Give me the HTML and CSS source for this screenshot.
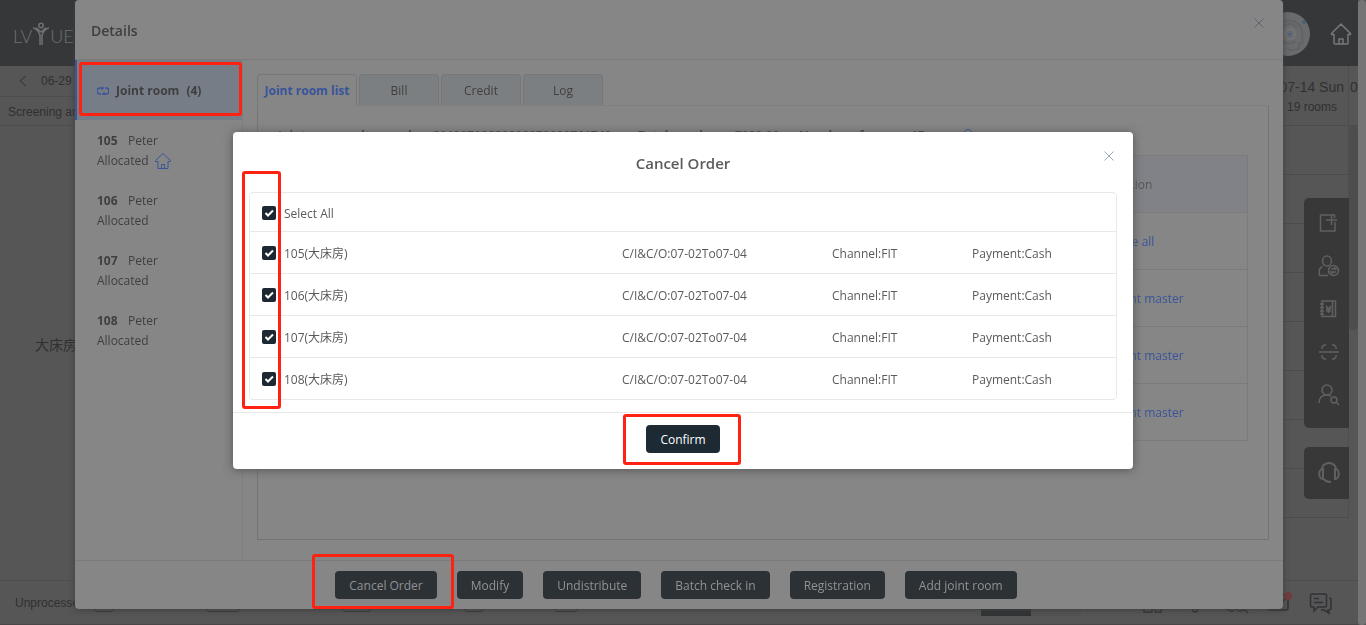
FILE: index.html
```html
<!DOCTYPE html>
<html lang="en">
<head>
<meta charset="utf-8">
<title>Cancel Order</title>
<link rel="stylesheet" href="styles.css">
</head>
<body>
<div class="app">
  <header class="topbar">
    <div class="logo" aria-label="LVYUE">
      <span>LV</span>
      <svg width="18" height="24" viewBox="0 0 18 24" fill="none" stroke="currentColor" stroke-width="1.5"><circle cx="9" cy="3.500" r="2.200"/><path d="M1 6c3 0 5 2 7 7v10M17 6c-3 0-5 2-7 7v10M4 6c2 1 3 2.500 5 4 2-1.500 3-3 5-4"/></svg>
      <span>UE</span>
    </div>
    <div class="topbar-right">
      <svg class="avatar" width="44" height="44" viewBox="0 0 44 44"><circle cx="22" cy="22" r="22" fill="#6a6b6c"/><g fill="none" stroke="#626364" stroke-width="2"><path d="M10 34c-3-10-1-22 10-25 10-2 17 5 16 14l1 7-4 2v4c-4 3-9 3-12 0"/><path d="M16 15c5-4 12-4 15 1M16 29c4 3 9 3 13 0"/><circle cx="24" cy="22" r="5" stroke="#737475"/></g><circle cx="24" cy="22" r="1.500" fill="#42608a"/><circle cx="38" cy="10" r="2" fill="#4a5d7c"/></svg>
      <svg class="home" width="22" height="22" viewBox="0 0 22 22" fill="none" stroke="#777879" stroke-width="1.500" stroke-linejoin="round"><path d="M11 1 1.500 10.500v1H4V20a1 1 0 0 0 1 1h12a1 1 0 0 0 1-1v-8.500h2.500v-1z"/><path d="M9 21v-5h4v5"/></svg>
    </div>
  </header>
  <div class="board">
    <div class="rooms">
      <div class="date-nav"><svg width="8" height="12" viewBox="0 0 8 12" fill="none" stroke="#303030"><path d="M7 1 1 6l6 5"/></svg><span>06-29</span></div>
      <div class="filter">Screening and</div>
      <div class="room-type">大床房</div>
    </div>
    <div class="calendar">
      <div class="days"><div class="day"><b>07-14 Sun</b><span>19 rooms</span></div><div class="day-next">0</div></div>
      <div class="cells"><i></i><i></i><i></i><i></i><i></i><i></i><i></i><i></i></div>
    </div>
  </div>
  <footer class="status">
    <span class="unprocessed">Unprocessed</span>
    <span class="slot"><i class="w20"></i></span><span class="slot slot-b"><i class="w34"></i></span><span class="slot slot-c"><i class="w28"></i></span><span class="slot slot-d"><i class="w20"></i></span><span class="slot slot-e"><i class="w24"></i></span>
    <span class="pager"><i></i><i></i></span>
    <div class="status-icons">
      <svg width="24" height="22" viewBox="0 0 24 22"><path d="M11 2H3v18h8v-7M14 20l1-6 6-9 2 2-3 13h-6"/></svg>
      <svg width="24" height="22" viewBox="0 0 24 22"><path d="M3 16h18M5 16V9a7 7 0 0 1 14 0v7M9 16c0 5 6 5 6 0"/></svg>
      <svg width="24" height="22" viewBox="0 0 24 22"><path d="M5 2h14v5M5 2v13H2v2l4 2h3"/><circle cx="15" cy="13" r="6"/><path d="m19 17 4 4"/></svg>
      <svg width="24" height="22" viewBox="0 0 24 22"><rect x="1" y="3" width="20" height="15" rx="2"/><path d="m1 5 10 8L21 5"/><circle class="dot" cx="21" cy="4" r="4"/></svg>
      <svg width="24" height="22" viewBox="0 0 24 22"><path d="M3 2h13a1.500 1.500 0 0 1 1.500 1.500v10a1.500 1.500 0 0 1-1.500 1.500H9l-4 4v-4H3a1.500 1.500 0 0 1-1.500-1.500v-10A1.500 1.500 0 0 1 3 2zM5 6.500h5M5 10.500h9M20 6c1 0 2 .5 2 2v8c0 1-1 2-2 2h-1l1 3-5-3h-3"/></svg>
    </div>
  </footer>
</div>

<aside class="tools">
  <nav class="toolbox">
    <svg width="22" height="22" viewBox="0 0 22 22"><path d="M12 3H2.500v16H17v-9M13.500 3v10M8 8h11M12 3h4.500v3"/></svg>
    <svg width="22" height="22" viewBox="0 0 22 22"><ellipse cx="9" cy="6" rx="4.500" ry="5"/><path d="M10 20.500H1.500c-1-5 0-8 3-9"/><circle cx="15.500" cy="15.500" r="5"/><path d="M13 14h5l-2-2M18 17h-5l2 2"/></svg>
    <svg width="22" height="22" viewBox="0 0 22 22"><path d="M4 3h13.500v15.500H4zM14.500 3v15.500M2 6h4M2 9.500h4M2 13h4M2 16h4M8 8l2.500 3L13 8M10.500 11v4M8 11h5M8 13h5"/></svg>
    <svg width="22" height="22" viewBox="0 0 22 22"><path d="M1 11h20M4 8V6l2-2h2M14 4h2l2 2v2M4 14v2l2 2h2M14 18h2l2-2v-2"/></svg>
    <svg width="22" height="22" viewBox="0 0 22 22"><circle cx="9" cy="6" r="5"/><path d="M1 19c0-5 3-8 8-8 2 0 3 .5 4 1"/><circle cx="16" cy="16" r="3"/><path d="m18 18 3 3"/></svg>
  </nav>
  <nav class="toolbox support">
    <svg width="22" height="22" viewBox="0 0 22 22"><path d="M4 7a7 6 0 0 1 14 0M5 7c-5 0-5 10 0 10zM17 7c5 0 5 10 0 10zM6 17c1 2 4 3 7 3"/></svg>
  </nav>
</aside>
<div class="inner-scroll"></div>
<div class="page-scroll"></div>

<div class="layer">
  <section class="details">
    <header class="details-head"><h2>Details</h2>
      <button class="close" aria-label="Close details"><svg width="10" height="10" viewBox="0 0 10 10"><path d="m.5.5 9 9m0-9-9 9"/></svg></button>
    </header>
    <div class="details-body">
      <div class="side">
        <div class="side-tab"><svg width="12" height="8" viewBox="0 0 12 8" fill="none" stroke="#39549a" stroke-width="1.500"><path d="M4 7H3a3 3 0 0 1 0-6h3M8 1h1a3 3 0 0 1 0 6H6M4.500 0 6 1 4.500 2.500M7.500 5.500 6 7l1.500 1"/></svg><b>Joint room</b><b>(4)</b><span class="mark mark-tab"></span></div>
        <div class="guest"><p><b>105</b>Peter</p><p>Allocated<svg width="16" height="16" viewBox="0 0 16 16" fill="none" stroke="#39549a"><path d="M8 .5.500 7.500v1H3v7h10v-7h2.500v-1zM6.500 15.500v-4h3v4"/></svg></p></div>
        <div class="guest"><p><b>106</b>Peter</p><p>Allocated</p></div>
        <div class="guest"><p><b>107</b>Peter</p><p>Allocated</p></div>
        <div class="guest"><p><b>108</b>Peter</p><p>Allocated</p></div>
      </div>
      <div class="content">
        <div class="tabs"><button class="tab active">Joint room list</button><button class="tab">Bill</button><button class="tab">Credit</button><button class="tab">Log</button></div>
        <div class="panel">
          <div class="summary"><span class="order">Joint room order number:</span><span class="digits">20190702222222270222761742</span><span class="total">Total number:</span><span class="sum">7298.00</span><span class="count">Number of rooms:</span><span>17</span><svg width="10" height="10" viewBox="0 0 10 10" fill="none" stroke="#39549a"><circle cx="5" cy="5" r="4.500"/></svg></div>
          <table class="orders">
            <tr><th></th><th>Operation</th></tr>
            <tr><td></td><td><a href="#">Release all</a></td></tr>
            <tr><td></td><td><a href="#">Set joint master</a></td></tr>
            <tr><td></td><td><a href="#">Set joint master</a></td></tr>
            <tr><td></td><td><a href="#">Set joint master</a></td></tr>
          </table>
        </div>
      </div>
    </div>
    <footer class="actions">
      <span class="marked"><button class="btn">Cancel Order</button><span class="mark mark-cancel"></span></span>
      <button class="btn">Modify</button><button class="btn">Undistribute</button><button class="btn">Batch check in</button><button class="btn">Registration</button><button class="btn">Add joint room</button>
    </footer>
  </section>
</div>

<div class="layer layer-dialog">
  <section class="dialog" role="dialog" aria-labelledby="dlg-title">
    <header class="dialog-head"><h3 id="dlg-title">Cancel Order</h3>
      <button class="close" aria-label="Close"><svg width="10" height="10" viewBox="0 0 10 10"><path d="m.5.5 9 9m0-9-9 9"/></svg></button>
    </header>
    <div class="list">
      <div class="row row-all"><label><input type="checkbox" checked><span>Select All</span></label></div>
      <div class="row"><label><input type="checkbox" checked><span>105(大床房)</span></label><span>C/I&amp;C/O:07-02To07-04</span><span>Channel:FIT</span><span>Payment:Cash</span></div>
      <div class="row"><label><input type="checkbox" checked><span>106(大床房)</span></label><span>C/I&amp;C/O:07-02To07-04</span><span>Channel:FIT</span><span>Payment:Cash</span></div>
      <div class="row"><label><input type="checkbox" checked><span>107(大床房)</span></label><span>C/I&amp;C/O:07-02To07-04</span><span>Channel:FIT</span><span>Payment:Cash</span></div>
      <div class="row"><label><input type="checkbox" checked><span>108(大床房)</span></label><span>C/I&amp;C/O:07-02To07-04</span><span>Channel:FIT</span><span>Payment:Cash</span></div>
      <span class="mark mark-checks"></span>
    </div>
    <footer class="dialog-foot"><span class="marked"><button class="btn btn-confirm">Confirm</button><span class="mark mark-confirm"></span></span></footer>
  </section>
</div>
</body>
</html>
```
FILE: styles.css
```css
* { box-sizing: border-box; }
body {
  margin: 0;
  height: 100vh;
  overflow: hidden;
  background: #565656;
  color: #3f3f3f;
  font: 12px/20px "Open Sans", "Noto Sans CJK SC", sans-serif;
}
h2, h3, p { margin: 0; }
button { font: inherit; color: inherit; border: 0; margin: 0; cursor: pointer; }

/* Hotel board behind the dialogs */
.app {
  display: flex;
  flex-direction: column;
  height: 100vh;
  padding-right: 8px;
  font-family: "Liberation Sans", "Noto Sans CJK SC", sans-serif;
  color: #303030;
}
.topbar {
  display: flex;
  flex: none;
  justify-content: space-between;
  align-items: center;
  height: 66px;
  padding: 2px 6px 0 13px;
  background: #363739;
}
.logo {
  display: flex;
  align-items: flex-end;
  color: #6f7172;
  font: 300 18px/20px Lato, sans-serif;
}
.topbar-right { display: flex; align-items: center; gap: 20px; }
.board { display: flex; flex: 1; min-height: 0; justify-content: space-between; }
.rooms { width: 200px; }
.date-nav {
  display: flex;
  align-items: center;
  gap: 14px;
  height: 31px;
  padding-left: 19px;
  border-bottom: 1px solid #4e4e4e;
}
.filter { height: 29px; padding: 5px 8px; border-bottom: 1px solid #4e4e4e; }
.room-type { padding: 209px 0 0 35px; font-size: 14px; }
.calendar { width: 158px; padding-right: 9px; }
.days { display: flex; height: 60px; border-bottom: 1px solid #4c4c4c; margin-right: -10px; }
.day { flex: 1; border-right: 1px solid #4e4e4e; padding: 11px 4px 0 0; text-align: right; }
.day b { display: block; font-size: 14px; font-weight: 400; }
.day span { padding-right: 7px; }
.day-next { width: 10px; padding-top: 11px; text-align: center; font-size: 14px; }
.cells { border-right: 1px solid #4e4e4e; }
.cells i { display: block; height: 49px; border-bottom: 1px solid #4c4c4c; }
.status {
  display: flex;
  flex: none;
  align-items: center;
  height: 45px;
  padding: 0 25px 0 15px;
  border-top: 1px solid #4e4e4e;
  border-bottom: 1px solid #494747;
}
.unprocessed { width: 79px; }
.slot { width: 112px; }
.slot-b { width: 137px; }
.slot-c { width: 121px; }
.slot-d { width: 90px; }
.slot-e { width: 427px; }
.slot i { display: block; height: 18px; border: 1px solid #363636; border-radius: 3px; }
.w20 { width: 20px; }
.w24 { width: 24px; }
.w28 { width: 28px; }
.w34 { width: 34px; }
.pager { display: flex; }
.pager i { width: 50px; height: 26px; background: #303234; }
.pager i + i { background: #535353; }
.status-icons { display: flex; gap: 18px; margin-left: auto; }
.status-icons svg { fill: none; stroke: #303236; stroke-width: 1.5; overflow: visible; }
.status-icons .dot { fill: #743b3b; stroke: none; }

/* Floating tools and scrollbars */
.tools {
  position: fixed;
  top: 198px;
  right: 17px;
  display: flex;
  flex-direction: column;
  gap: 19px;
  z-index: 2;
}
.toolbox {
  display: flex;
  flex-direction: column;
  align-items: center;
  gap: 21px;
  width: 45px;
  padding: 14px 0 22px 4px;
  background: #383838;
  border-radius: 5px 0 0 5px;
}
.toolbox svg { fill: none; stroke: #606060; stroke-width: 1.5; }
.toolbox.support { padding: 15px 0 15px 4px; }
.support svg { stroke-width: 2; }
.inner-scroll {
  position: fixed;
  top: 126px;
  right: 8px;
  width: 9px;
  height: 204px;
  border-radius: 4px;
  background: #4d4d4d;
}
.page-scroll { position: fixed; top: 0; right: 0; bottom: 0; width: 8px; border-radius: 4px; background: #757575; }

/* Details window */
.layer { position: fixed; inset: 0; display: flex; padding: 0 83px 16px 75px; }
.details {
  display: flex;
  flex: 1;
  flex-direction: column;
  min-width: 0;
  background: #868686;
  border-radius: 4px;
  box-shadow: 0 1px 6px #3e3e3e;
}
.details-head {
  display: flex;
  justify-content: space-between;
  height: 60px;
  padding: 18px 19px 0 16px;
  border-bottom: 1px solid #7b7b7b;
}
.details-head h2 { font-size: 14px; line-height: 26px; font-weight: 600; }
.close { align-self: flex-start; display: flex; padding: 0; background: none; }
.close svg { fill: none; stroke: #5a6472; }
.details-body { display: flex; flex: 1; min-height: 0; }
.side { width: 168px; border-right: 1px solid #7e7e7e; }
.side-tab {
  position: relative;
  display: flex;
  align-items: center;
  gap: 7px;
  height: 60px;
  padding: 2px 0 0 20px;
  border-left: 2px solid #3c5690;
  background: #777d87;
}
.guest { padding: 11px 0 9px 22px; }
.guest p { display: flex; align-items: center; height: 20px; }
.guest b { width: 31px; }
.guest svg { margin-left: 6px; }
.content { display: flex; flex: 1; flex-direction: column; min-width: 0; padding: 14px 14px 20px; }
.tabs { display: flex; gap: 2px; height: 31px; }
.tab {
  width: 80px;
  height: 32px;
  padding: 0;
  background: #7c7f81;
  border: 1px solid #777;
  border-bottom: 0;
  border-radius: 4px 4px 0 0;
}
.tab.active { width: 100px; background: #868686; color: #39549a; font-weight: 700; z-index: 1; }
.panel {
  flex: 1;
  min-height: 0;
  padding: 20px 20px 0;
  border: 1px solid #747474;
  border-top-color: #7f7f7f;
}
.summary { display: flex; height: 29px; font-weight: 700; line-height: 20px; white-space: nowrap; }
.order { width: 155px; overflow: hidden; }
.digits { width: 205px; overflow: hidden; }
.total { width: 97px; }
.sum { width: 64px; }
.count { width: 112px; }
.summary svg { margin: 3px 0 0 38px; }
.orders { width: 100%; border-collapse: collapse; border: 1px solid #7b7b7b; table-layout: fixed; }
.orders tr { height: 57px; border-bottom: 1px solid #7b7b7b; }
.orders th, .orders td { padding: 2px 0 0; text-align: left; font-weight: 400; }
.orders th { background: #808287; color: #565656; }
.orders th:last-child { width: 152px; }
.orders a { color: #39549a; text-decoration: none; }
.actions {
  display: flex;
  justify-content: center;
  align-items: flex-start;
  gap: 20px;
  height: 49px;
  padding: 10px 6px 0 0;
  border-top: 1px solid #7b7b7b;
}
.btn {
  height: 28px;
  padding: 2px 14px 0;
  border-radius: 4px;
  background: #2c3136;
  color: #929292;
  white-space: nowrap;
}

/* Cancel order dialog */
.layer-dialog { padding: 132px 0 0; justify-content: center; align-items: flex-start; z-index: 3; }
.dialog {
  width: 900px;
  max-width: 100%;
  background: #fff;
  color: #5a5a5a;
  border-radius: 4px;
  box-shadow: 0 1px 10px #555;
}
.dialog-head { position: relative; height: 60px; padding-top: 20px; text-align: center; }
.dialog-head h3 { font-size: 15px; line-height: 22px; font-weight: 600; }
.dialog-head .close { position: absolute; top: 19px; right: 19px; }
.dialog .close svg { stroke: #94a8ba; }
.list { position: relative; margin: 0 16px 12px; border: 1px solid #e8e8e8; border-radius: 4px; }
.row {
  display: grid;
  grid-template-columns: 1fr 210px 140px 144px;
  align-items: center;
  height: 42px;
  padding-left: 12px;
  border-top: 1px solid #e8e8e8;
}
.row-all { height: 38px; border-top: 0; padding-top: 1px; }
.row span { padding-top: 2px; }
.row label { display: flex; align-items: center; gap: 8px; }
.row input {
  appearance: none;
  width: 14px;
  height: 14px;
  margin: 0;
  border-radius: 2px;
  background: #1d2833 url("data:image/svg+xml,%3Csvg xmlns='http://www.w3.org/2000/svg' viewBox='0 0 14 14'%3E%3Cpath d='M3.500 7l2.500 2.500L11 4.500' fill='none' stroke='white' stroke-width='2'/%3E%3C/svg%3E");
}
.dialog-foot {
  display: flex;
  justify-content: center;
  padding: 12px 0 16px;
  border-top: 1px solid #e8e8e8;
}
.btn-confirm { background: #1d2a34; color: #fff; }

/* Red call-out frames */
.marked { position: relative; display: flex; }
.mark { position: absolute; border: 3px solid #ff2112; border-radius: 3px; pointer-events: none; }
.mark.mark-tab { inset: 2px 0 4px 2px; }
.mark.mark-cancel { inset: -17px -17px -10px -23px; }
.mark.mark-checks { top: -22px; bottom: -10px; left: -8px; width: 39px; padding: 0; }
.mark.mark-confirm { inset: -11px -21px -12px -23px; }
```
